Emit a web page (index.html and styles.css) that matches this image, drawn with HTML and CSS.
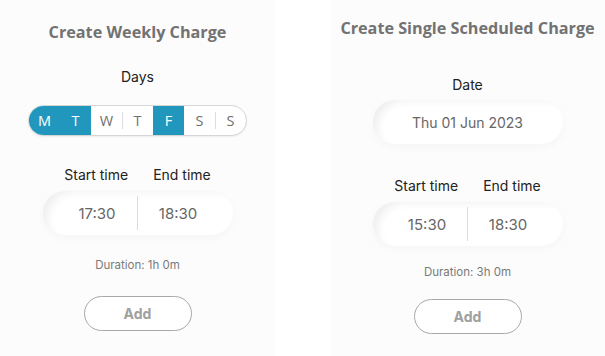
FILE: index.html
```html
<!DOCTYPE html>
<html>
<head>
<meta charset="utf-8">
<link rel="stylesheet" href="styles.css">
</head>
<body>
<div class="page">
  <section class="panel panel-weekly">
    <h1 class="title">Create Weekly Charge</h1>
    <div class="label label-days">Days</div>
    <div class="days">
      <span class="day on">M</span>
      <span class="day on">T</span>
      <span class="day">W</span>
      <span class="day">T</span>
      <span class="day on">F</span>
      <span class="day">S</span>
      <span class="day">S</span>
    </div>
    <div class="time-labels">
      <span class="label">Start time</span>
      <span class="label">End time</span>
    </div>
    <div class="pill time-pill">
      <span class="cell">17:30</span>
      <span class="divider"></span>
      <span class="cell">18:30</span>
    </div>
    <div class="duration">Duration: 1h 0m</div>
    <button class="add">Add</button>
  </section>
  <div class="gap"></div>
  <section class="panel panel-single">
    <h1 class="title">Create Single Scheduled Charge</h1>
    <div class="label label-date">Date</div>
    <div class="pill date-pill">Thu 01 Jun 2023</div>
    <div class="time-labels">
      <span class="label">Start time</span>
      <span class="label">End time</span>
    </div>
    <div class="pill time-pill">
      <span class="cell">15:30</span>
      <span class="divider"></span>
      <span class="cell">18:30</span>
    </div>
    <div class="duration">Duration: 3h 0m</div>
    <button class="add">Add</button>
  </section>
</div>
</body>
</html>
```
FILE: styles.css
```css
html, body {
  margin: 0;
  padding: 0;
  background: #ffffff;
}
.page {
  display: flex;
  width: 605px;
  height: 356px;
}
.panel {
  width: 275px;
  background: #fcfcfc;
  display: flex;
  flex-direction: column;
  align-items: center;
  font-family: Inter, "Liberation Sans", sans-serif;
}
.gap {
  width: 55px;
  background: #ffffff;
}
.title {
  margin: 0;
  font-family: "Open Sans", "Liberation Sans", sans-serif;
  font-weight: 700;
  font-size: 16.2px;
  line-height: 24px;
  color: #727272;
  white-space: nowrap;
}
.panel-weekly .title { margin-top: 20px; }
.panel-single .title { margin-top: 16px; }

.label {
  font-size: 14px;
  line-height: 18px;
  color: #222;
}
.label-days { margin-top: 24px; }
.label-date { margin-top: 36px; }

.days {
  margin-top: 19px;
  display: flex;
  height: 29px;
  border: 1px solid #d6d6d6;
  border-radius: 16px;
  overflow: hidden;
  background: #fff;
  box-shadow: 0 1px 2px rgba(0,0,0,0.06);
}
.day {
  width: 31px;
  display: flex;
  align-items: center;
  justify-content: center;
  font-family: "Open Sans", "Liberation Sans", sans-serif;
  font-size: 14.5px;
  color: #6f6f6f;
  position: relative;
}
.day + .day::before {
  content: "";
  position: absolute;
  left: 0;
  top: 6px;
  bottom: 6px;
  width: 1px;
  background: #dedede;
}
.day.on {
  background: #2297bd;
  color: #fff;
}
.day.on + .day.on::before { background: #1a7f9f; }
.day.on + .day::before,
.day + .day.on::before { display: none; }

.time-labels {
  display: flex;
  gap: 25px;
}
.panel-weekly .time-labels { margin-top: 30px; }
.panel-single .time-labels { margin-top: 33px; }

.pill {
  width: 190px;
  height: 44px;
  border-radius: 22px;
  background: #fff;
  box-shadow: inset 10px 6px 10px -6px rgba(0,0,0,0.07), 0 3px 8px rgba(0,0,0,0.03);
  color: #666;
  font-size: 15px;
  margin-top: 7px;
}
.date-pill {
  display: flex;
  align-items: center;
  justify-content: center;
  font-size: 14px;
  margin-top: 6px;
}
.time-pill {
  display: flex;
  align-items: center;
  justify-content: center;
}
.cell {
  width: 80px;
  text-align: center;
}
.divider {
  width: 1px;
  height: 34px;
  background: #dcdcdc;
}
.duration {
  font-size: 11.5px;
  line-height: 16px;
  color: #7a7a7a;
}
.panel-weekly .duration { margin-top: 22px; }
.panel-single .duration { margin-top: 18px; }

.add {
  width: 108px;
  height: 35px;
  border: 1px solid #a8a8a8;
  border-radius: 18px;
  background: #fff;
  font-family: Inter, "Liberation Sans", sans-serif;
  font-weight: 700;
  font-size: 14px;
  color: #a0a0a0;
  padding: 0;
}
.panel-weekly .add { margin-top: 23px; }
.panel-single .add { margin-top: 19px; }
```
